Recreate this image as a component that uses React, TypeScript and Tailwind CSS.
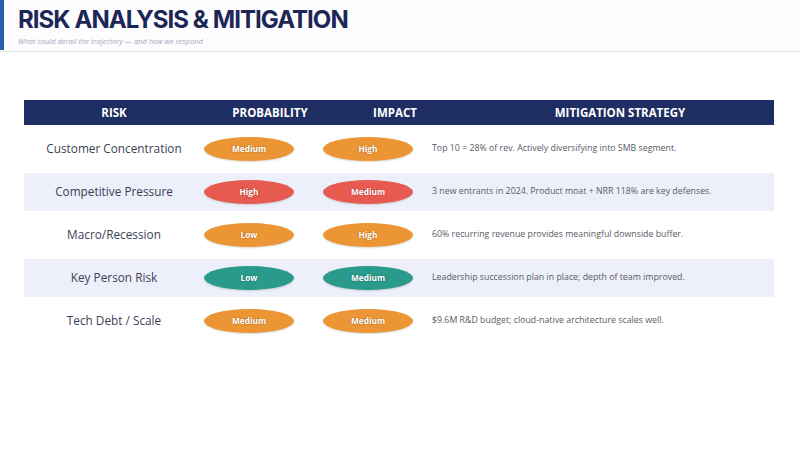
const body = { fontFamily: '"Open Sans", "Liberation Sans", sans-serif' };
const head = { fontFamily: 'Inter, "Liberation Sans", sans-serif' };

type Level = "orange" | "red" | "teal";

const pillColor: Record<Level, string> = {
  orange: "bg-[#eb9535]",
  red: "bg-[#e65a50]",
  teal: "bg-[#2a9a8a]",
};

const rows: { risk: string; prob: [string, Level]; impact: [string, Level]; note: string }[] = [
  { risk: "Customer Concentration", prob: ["Medium", "orange"], impact: ["High", "orange"], note: "Top 10 = 28% of rev. Actively diversifying into SMB segment." },
  { risk: "Competitive Pressure", prob: ["High", "red"], impact: ["Medium", "red"], note: "3 new entrants in 2024. Product moat + NRR 118% are key defenses." },
  { risk: "Macro/Recession", prob: ["Low", "orange"], impact: ["High", "orange"], note: "60% recurring revenue provides meaningful downside buffer." },
  { risk: "Key Person Risk", prob: ["Low", "teal"], impact: ["Medium", "teal"], note: "Leadership succession plan in place; depth of team improved." },
  { risk: "Tech Debt / Scale", prob: ["Medium", "orange"], impact: ["Medium", "orange"], note: "$9.6M R&D budget; cloud-native architecture scales well." },
];

const Pill = ({ label, level }: { label: string; level: Level }) => (
  <div
    className={`${pillColor[level]} w-[90px] h-[24px] rounded-[50%] flex items-center justify-center text-white text-[8.3px] font-bold shadow-[0_1px_2px_rgba(0,0,0,0.15)] [text-shadow:0_0_2px_rgba(0,0,0,0.35)]`}
  >
    {label}
  </div>
);

export default function App() {
  return (
    <div className="w-[800px] h-[450px] bg-white overflow-hidden" style={body}>
      {/* Title bar */}
      <div className="flex h-[52px] border-b border-[#dfe1ea] bg-[#fdfdff]">
        <div className="w-[4px] h-[50px] bg-[#2b5ea8]" />
        <div className="pl-[14px] pt-[5px]">
          <h1 className="text-[24px] leading-[30px] font-bold text-[#1d2756] tracking-[-0.95px]" style={head}>
            RISK ANALYSIS &amp; MITIGATION
          </h1>
          <p className="text-[7.5px] italic text-[#a4a7ba] mt-[1px]">
            What could derail the trajectory — and how we respond
          </p>
        </div>
      </div>

      {/* Table */}
      <div className="w-[750px] ml-[24px] mt-[48px] flex flex-col gap-[5px]">
        <div className="grid grid-cols-[180px_132px_118px_1fr] h-[25px] items-center bg-[#1e2d62] text-white text-[11.5px] font-bold">
          <div className="text-center">RISK</div>
          <div className="text-center">PROBABILITY</div>
          <div className="text-center">IMPACT</div>
          <div className="text-center pl-[12px]">MITIGATION STRATEGY</div>
        </div>
        {rows.map((r, i) => (
          <div
            key={r.risk}
            className={`grid grid-cols-[180px_119px_109px_1fr] h-[38px] items-center ${i % 2 === 1 ? "bg-[#edf0fa]" : "bg-white"}`}
          >
            <div className="text-center text-[11.8px] text-[#3b3f56]">{r.risk}</div>
            <Pill label={r.prob[0]} level={r.prob[1]} />
            <Pill label={r.impact[0]} level={r.impact[1]} />
            <div className="text-[8.8px] text-[#595b66]">{r.note}</div>
          </div>
        ))}
      </div>
    </div>
  );
}
